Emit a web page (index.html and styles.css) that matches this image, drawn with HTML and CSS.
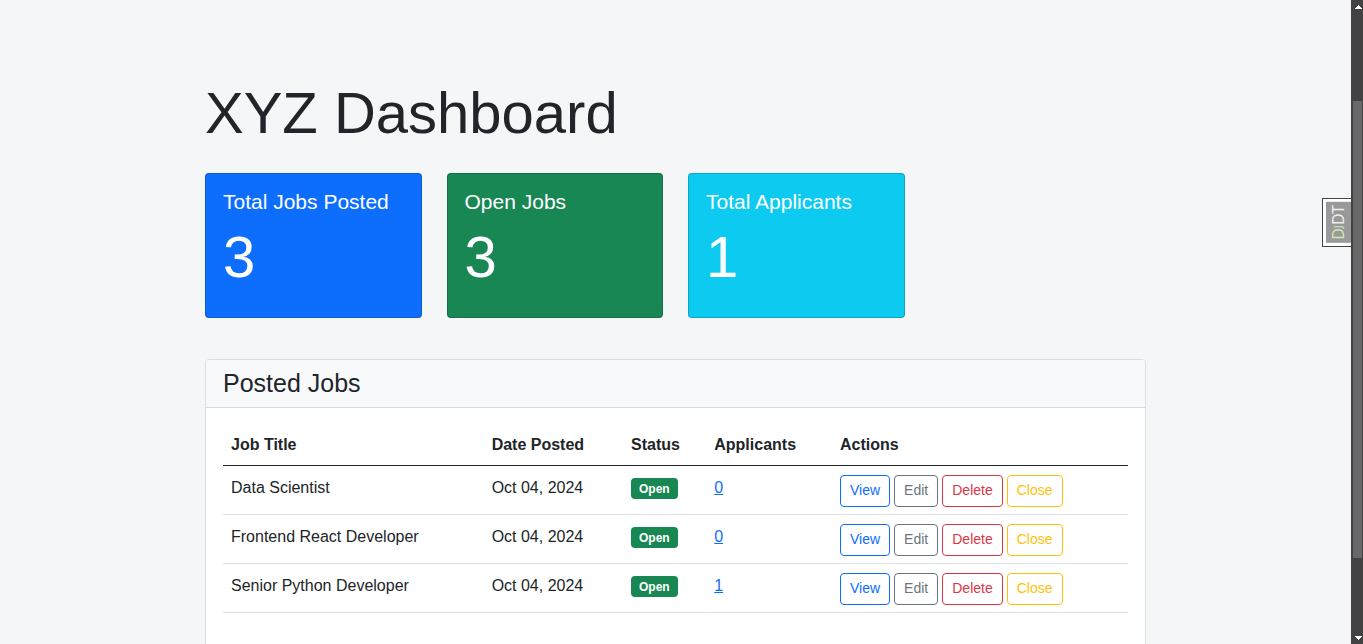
FILE: index.html
```html
<!DOCTYPE html>
<html lang="en">
<head>
<meta charset="utf-8">
<meta name="viewport" content="width=device-width, initial-scale=1">
<title>XYZ Dashboard</title>
<link rel="stylesheet" href="styles.css">
</head>
<body>
<main class="container">
  <h1 class="page-title">XYZ Dashboard</h1>
  <section class="stats">
    <article class="stat stat-primary">
      <h2 class="stat-label">Total Jobs Posted</h2>
      <p class="stat-value">3</p>
    </article>
    <article class="stat stat-success">
      <h2 class="stat-label">Open Jobs</h2>
      <p class="stat-value">3</p>
    </article>
    <article class="stat stat-info">
      <h2 class="stat-label">Total Applicants</h2>
      <p class="stat-value">1</p>
    </article>
  </section>
  <section class="panel">
    <header class="panel-header"><h2 class="panel-title">Posted Jobs</h2></header>
    <div class="panel-body">
      <table class="jobs">
        <colgroup><col class="col-title"><col class="col-date"><col class="col-status"><col class="col-applicants"><col class="col-actions"></colgroup>
        <thead>
          <tr><th scope="col">Job Title</th><th scope="col">Date Posted</th><th scope="col">Status</th><th scope="col">Applicants</th><th scope="col">Actions</th></tr>
        </thead>
        <tbody>
          <tr>
            <td>Data Scientist</td><td>Oct 04, 2024</td><td><span class="badge">Open</span></td><td><a class="link" href="#">0</a></td>
            <td><div class="actions"><a class="btn btn-view" href="#">View</a><a class="btn btn-edit" href="#">Edit</a><button class="btn btn-delete" type="button">Delete</button><button class="btn btn-close" type="button">Close</button></div></td>
          </tr>
          <tr>
            <td>Frontend React Developer</td><td>Oct 04, 2024</td><td><span class="badge">Open</span></td><td><a class="link" href="#">0</a></td>
            <td><div class="actions"><a class="btn btn-view" href="#">View</a><a class="btn btn-edit" href="#">Edit</a><button class="btn btn-delete" type="button">Delete</button><button class="btn btn-close" type="button">Close</button></div></td>
          </tr>
          <tr>
            <td>Senior Python Developer</td><td>Oct 04, 2024</td><td><span class="badge">Open</span></td><td><a class="link" href="#">1</a></td>
            <td><div class="actions"><a class="btn btn-view" href="#">View</a><a class="btn btn-edit" href="#">Edit</a><button class="btn btn-delete" type="button">Delete</button><button class="btn btn-close" type="button">Close</button></div></td>
          </tr>
        </tbody>
      </table>
    </div>
  </section>
</main>
<button class="toolbar-handle" type="button"><span class="toolbar-label"><span class="toolbar-green">D<small class="toolbar-small">J</small></span>DT</span></button>
<div class="scrollbar" aria-hidden="true">
  <svg class="arrow" viewBox="0 0 7 4" shape-rendering="crispEdges"><path d="M3 0h1v1h1v1h1v1h1v1H0V3h1V2h1V1h1z"/></svg>
  <div class="thumb"></div>
  <svg class="arrow" viewBox="0 0 7 4" shape-rendering="crispEdges"><path d="M0 0h7v1H6v1H5v1H4v1H3V3H2V2H1V1H0z"/></svg>
</div>
</body>
</html>
```

FILE: styles.css
```css
* { box-sizing: border-box; }

body {
  margin: 0;
  padding-right: 12px;
  height: 100vh;
  overflow: hidden;
  background: #f4f6f8;
  color: #212529;
  font: 16px/25px "Liberation Sans", Arial, sans-serif;
}

h1, h2, p { margin: 0; font-weight: 400; }

.container {
  max-width: 965px;
  margin: 0 auto;
  padding: 78px 12px 0;
}

.page-title {
  margin-bottom: 25px;
  font-size: 58px;
  line-height: 70px;
}

.stats {
  display: grid;
  grid-template-columns: repeat(4, 1fr);
  gap: 25px;
  margin-bottom: 41px;
}

.stat {
  padding: 15px 17px 25px;
  border: 1px solid rgba(0, 0, 0, 0.175);
  border-radius: 4px;
  color: #fff;
}
.stat-primary { background: #0d6efd; }
.stat-success { background: #198754; }
.stat-info { background: #0dcaf0; }

.stat-label {
  margin-bottom: 8px;
  font-size: 21px;
  line-height: 25px;
}
.stat-value {
  font-size: 58px;
  line-height: 70px;
}

.panel {
  border: 1px solid #dcdee0;
  border-radius: 4px;
  background: #fff;
}
.panel-header {
  padding: 9px 17px;
  border-bottom: 1px solid #d8dadc;
  border-radius: 3px 3px 0 0;
  background: #f8f9fb;
}
.panel-title {
  font-size: 25px;
  line-height: 29px;
}
.panel-body { padding: 16px 17px 60px; }

.jobs {
  width: 100%;
  table-layout: fixed;
  border-collapse: collapse;
}
.col-title { width: 28.8%; }
.col-date { width: 15.4%; }
.col-status { width: 9.2%; }
.col-applicants { width: 13.9%; }

.jobs th, .jobs td {
  text-align: left;
  vertical-align: top;
}
.jobs th {
  padding: 8px;
  border-bottom: 1px solid #212529;
}
.jobs td {
  padding: 9px 8px 7px;
  border-bottom: 1px solid #dee2e6;
}

.badge {
  display: inline-block;
  padding: 5px 8px 4px;
  border-radius: 4px;
  background: #198754;
  color: #fff;
  font-size: 12px;
  font-weight: 700;
  line-height: 12px;
}

.link { color: #0d6efd; }

.actions { display: flex; gap: 4px; }

.btn {
  padding: 3px 9px 5px;
  border: 1px solid currentColor;
  border-radius: 4px;
  background: transparent;
  font: 14px/22px "Liberation Sans", Arial, sans-serif;
  text-decoration: none;
}
.btn-view { color: #0d6efd; }
.btn-edit { color: #6c757d; }
.btn-delete { color: #dc3545; }
.btn-close { color: #ffc107; }

.toolbar-handle {
  position: fixed;
  top: 198px;
  right: 12px;
  padding: 3px 0 3px 3px;
  border: 1px solid #444;
  border-right: 0;
  background: #fff;
}
.toolbar-label {
  display: block;
  padding: 3px 0;
  background: #999;
  color: #eee;
  font: 16px/25px "Noto Sans", sans-serif;
  writing-mode: vertical-rl;
  transform: rotate(180deg);
}
.toolbar-green { color: #cfe7b8; }
.toolbar-small { font-size: 11px; line-height: 1; }

.scrollbar {
  position: fixed;
  top: 0;
  right: 0;
  bottom: 0;
  display: grid;
  grid-template-rows: 96fr 457fr 82fr;
  width: 12px;
  padding: 5px 1px 4px 2px;
  background: #424242;
}
.arrow { width: 7px; height: 4px; margin-left: 2px; fill: #fff; }
.arrow:last-child { align-self: end; }
.thumb { background: #686868; }
```
